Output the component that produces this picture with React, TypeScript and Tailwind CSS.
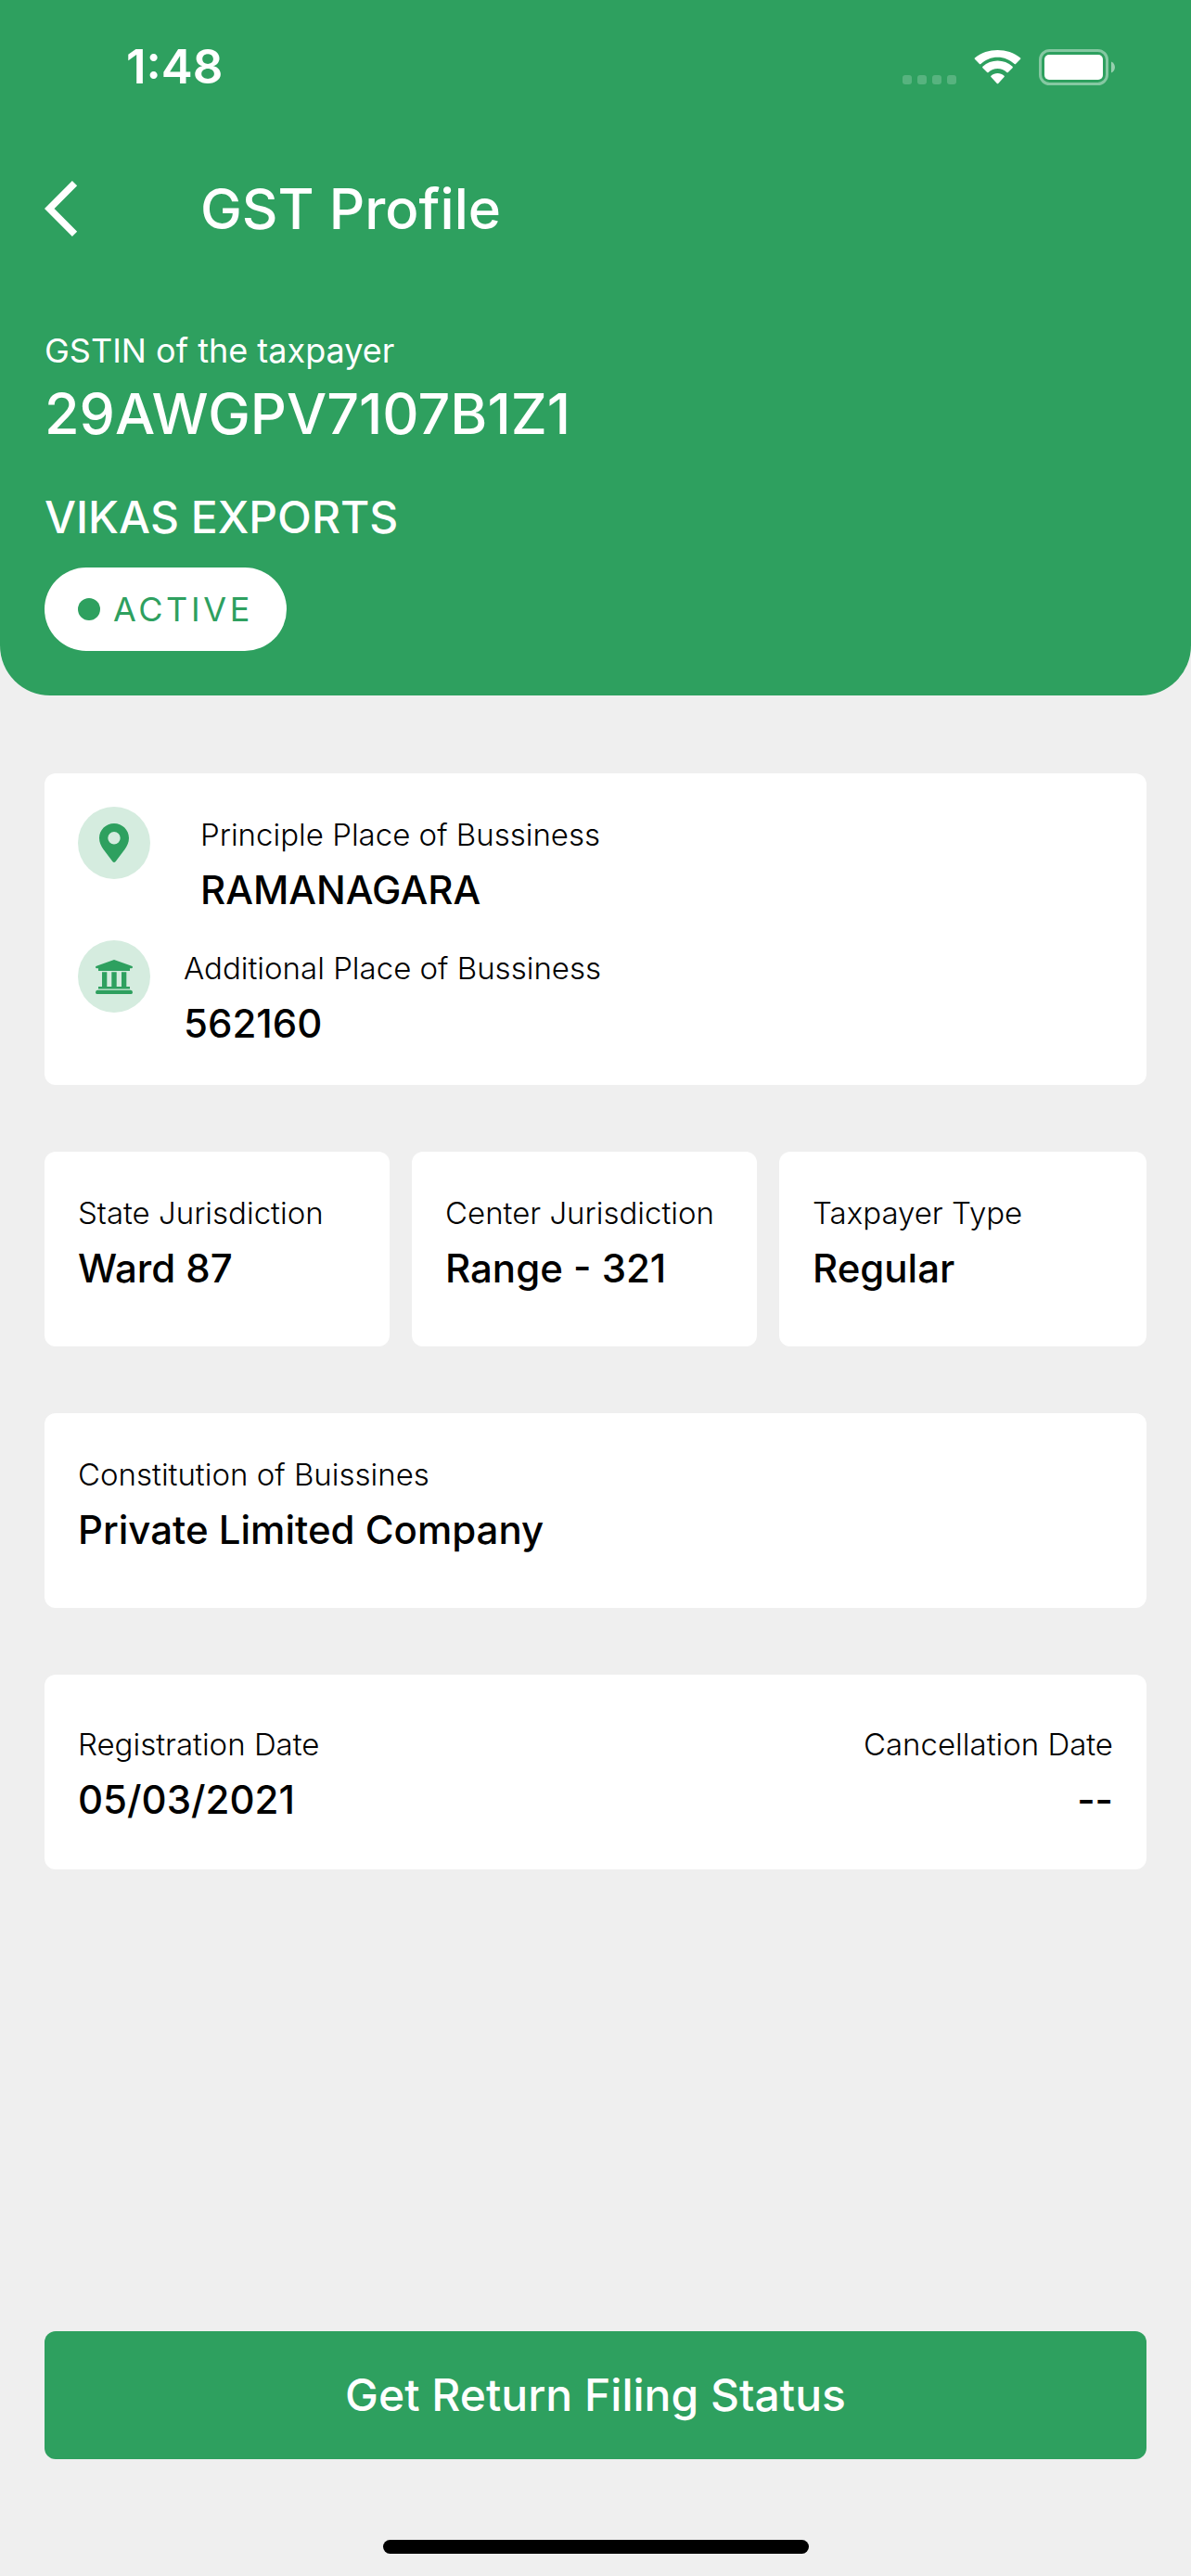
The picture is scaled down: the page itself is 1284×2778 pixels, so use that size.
import React from "react";

function StatusBar() {
  return (
    <div className="flex h-[144px] items-center justify-between pr-[82px] pl-[136px]">
      <span className="text-[51px] leading-[60px] font-semibold">1:48</span>
      <div className="flex items-center">
        <svg className="mt-[27px] mr-[19px] h-[10px] w-[58px]" viewBox="0 0 58 10" fill="white" fillOpacity="0.2">
          <rect x="0" width="10" height="10" rx="3" />
          <rect x="16" width="10" height="10" rx="3" />
          <rect x="32" width="10" height="10" rx="3" />
          <rect x="48" width="10" height="10" rx="3" />
        </svg>
        <svg className="mr-[19px] h-[37px] w-[51px]" viewBox="0 0 51 37" fill="white">
          <path d="M25.5 7.7c6.8 0 13.300 2.600 18.200 7.300.4.4 1 .4 1.300 0l5.100-5.200c.4-.4.4-1 0-1.400C36.400-2.800 14.600-2.800.9 8.400c-.4.4-.4 1 0 1.400L6 15c.4.4 1 .4 1.300 0C12.200 10.300 18.700 7.700 25.500 7.700z" />
          <path d="M25.500 20.100c3.700 0 7.200 1.400 9.900 3.900.4.4 1 .4 1.400 0l4.800-4.800c.4-.4.4-1 0-1.400-9-8.500-23.200-8.500-32.200 0-.4.4-.4 1 0 1.400l4.800 4.800c.4.4 1 .4 1.400 0 2.700-2.500 6.200-3.900 9.900-3.900z" />
          <path d="M32.600 29.100c.4-.4.4-1 0-1.400-4.100-3.500-10.100-3.500-14.200 0-.4.4-.4 1 0 1.400l6.400 6.800c.4.4 1 .4 1.400 0z" />
        </svg>
        <svg className="h-[39px] w-[82px]" viewBox="0 0 82 39" fill="none">
          <rect x="1.500" y="1.500" width="72" height="36" rx="10" stroke="white" strokeOpacity="0.42" strokeWidth="3" />
          <rect x="6" y="6" width="63" height="27" rx="5" fill="white" />
          <path d="M78 13.500c5.300 2 5.300 10 0 12z" fill="white" fillOpacity="0.5" />
        </svg>
      </div>
    </div>
  );
}

function Field({ label, value, className = "" }: { label: string; value: string; className?: string }) {
  return (
    <dl className={className}>
      <dt className="text-[33px] leading-[48px] font-light whitespace-nowrap">{label}</dt>
      <dd className="mt-3 text-[42px] leading-[48px] font-medium whitespace-nowrap">{value}</dd>
    </dl>
  );
}

function Card({ className = "", children }: { className?: string; children: React.ReactNode }) {
  return <section className={`rounded-xl bg-white px-9 ${className}`}>{children}</section>;
}

function Badge({ children }: { children: React.ReactNode }) {
  return (
    <span className="flex size-[78px] shrink-0 items-center justify-center rounded-full bg-[#d5ecdf] text-[#2ea05f]">
      {children}
    </span>
  );
}

export default function App() {
  return (
    <main className="flex min-h-screen flex-col bg-[#efefef] font-['Inter',sans-serif] text-black">
      <header className="rounded-b-[54px] bg-[#2ea05f] pb-12 text-white">
        <StatusBar />
        <div className="flex h-[162px] items-center px-12">
          <button type="button" aria-label="Back" className="flex h-[60px] w-[168px] items-center">
            <svg className="h-[60px] w-[36px]" viewBox="0 0 36 60" fill="none" stroke="white" strokeWidth="7.500">
              <path d="M32.500 2.700 5.200 30l27.300 27.300" />
            </svg>
          </button>
          <h1 className="text-[60px] leading-[72px] font-medium">GST Profile</h1>
        </div>
        <div className="px-12 pt-12">
          <p className="text-[36px] leading-[48px]">GSTIN of the taxpayer</p>
          <p className="mt-2 text-[61px] leading-[72px] font-medium">29AWGPV7107B1Z1</p>
          <p className="mt-[46px] text-[48px] leading-[60px] font-medium">VIKAS EXPORTS</p>
          <p className="mt-6 flex h-[90px] w-max items-center gap-[14px] rounded-full bg-white px-9 text-[#2ea05f]">
            <span className="size-6 rounded-full bg-[#2ea05f]" />
            <span className="text-[36px] leading-[48px] tracking-widest">ACTIVE</span>
          </p>
        </div>
      </header>

      <div className="flex flex-col gap-[72px] px-12 pt-[84px]">
        <Card className="flex flex-col gap-[30px] pt-9 pb-[42px]">
          <div className="flex gap-[54px]">
            <Badge>
              <svg className="h-[42px] w-[32px]" viewBox="0 0 32 42" fill="currentColor">
                <path fillRule="evenodd" d="M16 0C7.200 0 0 7 0 15.800c0 4.700 2 8.600 4.500 12.300L14.300 41q1.700 2 3.400 0l9.800-12.900C30 24.400 32 20.500 32 15.800 32 7 24.800 0 16 0zm0 22.500a6.700 6.700 0 1 1 0-13.400 6.700 6.700 0 0 1 0 13.400z" />
              </svg>
            </Badge>
            <Field label="Principle Place of Bussiness" value="RAMANAGARA" className="pt-1.5" />
          </div>
          <div className="flex gap-9">
            <Badge>
              <svg className="h-[37px] w-[40px]" viewBox="0 0 40 37" fill="currentColor">
                <path d="M20 0 39 6.800q1 .5 1 1.200 0 1.300-1.500 1.300H37V12H3V9.300H1.500Q0 9.300 0 8q0-.7 1-1.200zM7 13.300h5.300V29h5V13.300h5.400V29H28V13.300h5.300V29H37v2.500H3V29h4zM2 32.700h36q2 0 2 2.500 0 1.800-1.500 1.800h-37Q0 37 0 35.200q0-2.500 2-2.500z" />
              </svg>
            </Badge>
            <Field label="Additional Place of Bussiness" value="562160" className="pt-1.5" />
          </div>
        </Card>

        <div className="flex gap-6">
          <Card className="flex-1 pt-[42px] pb-[60px]">
            <Field label="State Jurisdiction" value="Ward 87" />
          </Card>
          <Card className="flex-1 pt-[42px] pb-[60px]">
            <Field label="Center Jurisdiction" value="Range - 321" />
          </Card>
          <Card className="w-1/3 pt-[42px] pb-[60px]">
            <Field label="Taxpayer Type" value="Regular" />
          </Card>
        </div>

        <Card className="pt-[42px] pb-[60px]">
          <Field label="Constitution of Buissines" value="Private Limited Company" />
        </Card>

        <Card className="flex justify-between py-[51px]">
          <Field label="Registration Date" value="05/03/2021" />
          <Field label="Cancellation Date" value="--" className="text-right" />
        </Card>
      </div>

      <footer className="mt-auto flex flex-col items-center px-12 pb-6">
        <button type="button" className="h-[138px] w-full rounded-xl bg-[#2ea05f] text-[48px] leading-[60px] font-medium text-white">
          Get Return Filing Status
        </button>
        <div className="mt-[87px] h-[15px] w-[459px] max-w-full rounded-full bg-black" />
      </footer>
    </main>
  );
}
